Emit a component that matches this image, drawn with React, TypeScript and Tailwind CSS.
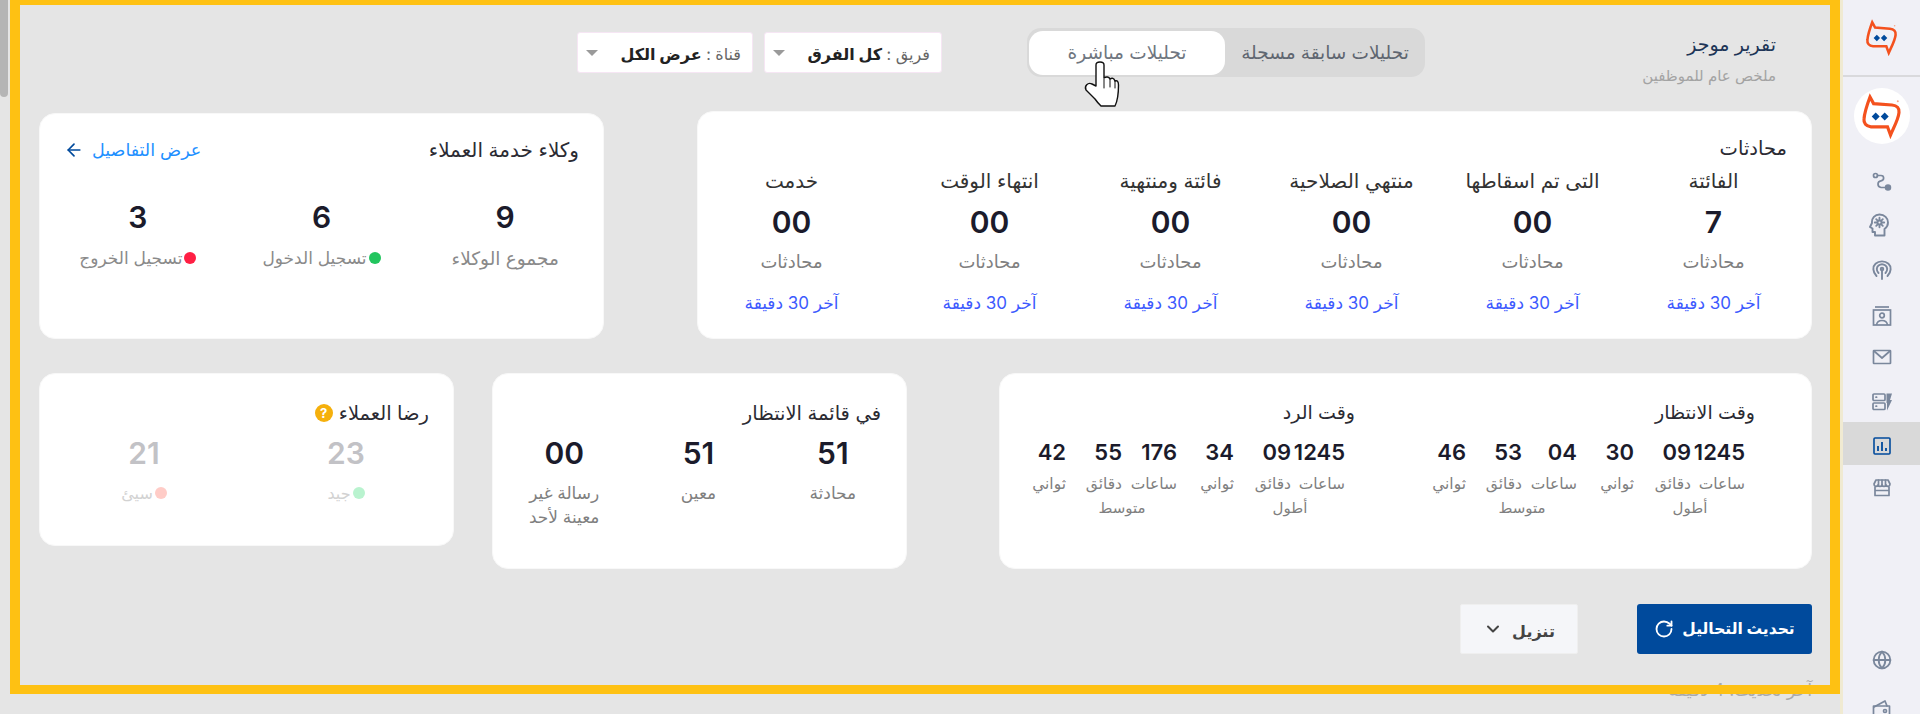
import React from "react";
import { RotateCw, ChevronDown, ArrowLeft, Globe } from "lucide-react";

const font = "font-['Inter','Noto_Sans','DejaVu_Sans',sans-serif]";

function Logo({ w, h }: { w: number; h: number }) {
  return (
    <svg width={w} height={h} viewBox="0 0 41 47" fill="none">
      <path d="M9 4 L12.6 10.6 L31 12 C36 12.5 38.5 15 38 19.5 C37.5 26 33 34 29.5 42 L26.5 33.8 L10 33.8 C5 33.5 2.5 30 3 26 C3.5 20 6 12 9 4 Z" stroke="#f4511e" strokeWidth="3.2" strokeLinejoin="miter" />
      <path d="M10.7 23.5 L14.7 19.5 L18.7 23.5 L14.7 27.5 Z M19.7 23.5 L23.7 19.5 L27.7 23.5 L23.7 27.5 Z" fill="#004a9c" />
      <circle cx="36.8" cy="8.3" r="1" fill="#f6a58a" />
    </svg>
  );
}

const s = { stroke: "#7a879c", strokeWidth: 1.7, fill: "none", strokeLinecap: "round" as const, strokeLinejoin: "round" as const };

const RouteIcon = () => (
  <svg width="20" height="20" viewBox="0 0 20 20" {...s}>
    <circle cx="3.5" cy="3.5" r="2" />
    <path d="M5.5 3.5 H9 C12.5 3.5 12.5 8.5 9 8.8 C5 9.2 5 15 9 15.5 H14" />
    <circle cx="16" cy="15.5" r="2.4" fill="#7a879c" />
  </svg>
);
const HeadIcon = () => (
  <svg width="20" height="24" viewBox="0 0 20 24" {...s} strokeWidth={1.9}>
    <path d="M6 22.5 V19 H3.5 V15.5 L1 14 L3 10 C2.5 5 6 1.5 10.5 1.5 C15.5 1.5 19 5 19 9.5 C19 12.5 17.5 14.5 15.5 16 V22.5 Z" />
    <circle cx="10.5" cy="9.5" r="2" />
    <path d="M10.5 4.8 V6.5 M10.5 12.5 V14.2 M5.8 9.5 H7.5 M13.5 9.5 H15.2 M7.2 6.2 L8.4 7.4 M12.6 11.6 L13.8 12.8 M13.8 6.2 L12.6 7.4 M8.4 11.6 L7.2 12.8" />
  </svg>
);
const RadioIcon = () => (
  <svg width="20" height="20" viewBox="0 0 20 20" {...s} strokeWidth={1.9}>
    <path d="M4.5 16 C0.5 12 0.5 6.5 3.5 3.8 C7 0.5 13 0.5 16.5 3.8 C19.5 6.5 19.5 12 15.5 16" />
    <path d="M6.5 13 C4 10.5 4.5 7 6.5 5.5 C8.5 4 11.5 4 13.5 5.5 C15.5 7 16 10.5 13.5 13" />
    <circle cx="10" cy="9" r="1.3" />
    <path d="M10 10.5 V19" />
  </svg>
);
const ContactIcon = () => (
  <svg width="20" height="20" viewBox="0 0 20 20" {...s} strokeLinecap="butt" strokeLinejoin="miter">
    <path d="M3 1 H17" />
    <rect x="1.5" y="4" width="17" height="15" />
    <circle cx="10" cy="9.5" r="2.3" />
    <path d="M4.5 19 C5 15.5 7 14.5 10 14.5 C13 14.5 15 15.5 15.5 19" />
  </svg>
);
const MailIcon = () => (
  <svg width="20" height="16" viewBox="0 0 20 16" {...s}>
    <rect x="1.5" y="1.5" width="17" height="13" rx="0.5" />
    <path d="M2 2 L10 9 L18 2" />
  </svg>
);
const ServerBoltIcon = () => (
  <svg width="20" height="18" viewBox="0 0 20 18" {...s}>
    <rect x="1" y="1" width="12" height="6.5" rx="1" />
    <rect x="1" y="10" width="12" height="6.5" rx="1" />
    <path d="M4 4.2 H4.6 M4 13.2 H4.6" />
    <path d="M14.5 0.5 H20 L18 7 H20 L15 17.5 V10 H14.5 Z" fill="#7a879c" stroke="none" />
  </svg>
);
const ChartIcon = () => (
  <svg width="18" height="18" viewBox="0 0 18 18" fill="none" stroke="#004a9c" strokeWidth="1.6">
    <rect x="1" y="1" width="16" height="16" rx="1" />
    <path d="M5 14 V9 M9 14 V5 M13 14 V11" strokeWidth="1.8" />
  </svg>
);
const StoreIcon = () => (
  <svg width="18" height="18" viewBox="0 0 18 18" {...s}>
    <path d="M3 1 H15 L17 5 C17 8 14 8 13 6 C12 8 10 8 9 6 C8 8 6 8 5 6 C4 8 1 8 1 5 Z" />
    <path d="M5.5 1 V6 M9 1 V6 M12.5 1 V6" />
    <path d="M2 8 V16.5 H16 V8 M2 11.5 H16" />
  </svg>
);
const WalletIcon = () => (
  <svg width="20" height="18" viewBox="0 0 20 18" {...s}>
    <path d="M2 8 L13 2 L15 7" />
    <rect x="1.5" y="7" width="16" height="10" />
    <circle cx="13" cy="12" r="1.5" />
  </svg>
);
const HandCursor = () => (
  <svg width="60" height="65" viewBox="0 0 60 65" fill="#fff" stroke="#111" strokeWidth="1.4" strokeLinejoin="round" strokeLinecap="round">
    <path d="M16 36 V15 C16 11 24 11 24 15 V28 C26 26.5 29 26.5 30 29 C32 27.5 34 28 35 31 C37 30 38.5 31.5 38.5 35 C38.5 44 38 50 35 56 H21 C19 54 17 52 15 49 L6 40 C4 36 8 32 12 34 Z" />
    <path d="M24 29 V38 M30 29 V37 M35 31 V38" fill="none" strokeWidth="1" />
  </svg>
);

const mainCols = ["الفائتة", "التى تم اسقاطها", "منتهي الصلاحية", "فائتة ومنتهية", "انتهاء الوقت", "خدمت"];

function Select({ label, value, w }: { label: string; value: string; w: string }) {
  return (
    <div className={`${w} h-[41px] bg-white border border-[#f6e6f4] rounded-[3px] flex items-center justify-between pr-[11px] pl-[8px] text-[16px] text-[#333]`}>
      <span className="pt-[2px]">
        <span className="text-[#666]">{label} : </span>
        <b className="font-bold text-[#222]">{value}</b>
      </span>
      <span className="w-0 h-0 border-x-[6px] border-x-transparent border-t-[6px] border-t-[#9a9a9a]" />
    </div>
  );
}

function TimeGroup({ nums, labels, widths, title }: { nums: string[]; labels: string[]; widths: string[]; title: string }) {
  return (
    <div className="flex flex-col w-[168px]">
      <div className="flex">
        {nums.map((n, i) => (
          <div key={i} className={widths[i]}>
            <div className="text-[22px] leading-[30px] font-semibold text-[#1b1b2b]" dir="ltr" style={{ textAlign: "right" }}>{n}</div>
            <div className="mt-[5px] text-[15.5px] leading-[24px] text-[#808080] whitespace-nowrap">{labels[i]}</div>
          </div>
        ))}
      </div>
      <div className="w-[110px] text-center text-[15px] leading-[24px] text-[#808080]">{title}</div>
    </div>
  );
}

function TimeBlock({ title, a, b }: { title: string; a: string[]; b: string[] }) {
  const l = ["ساعات", "دقائق", "ثواني"];
  return (
    <div>
      <div className="text-[19px] leading-[24px] text-[#2b2b33]">{title}</div>
      <div className="flex mt-[12px] mr-[10px]">
        <TimeGroup nums={a} labels={l} widths={["w-[54px]", "w-[57px]", "w-[57px]"]} title="أطول" />
        <TimeGroup nums={b} labels={l} widths={["w-[55px]", "w-[56px]", "w-[57px]"]} title="متوسط" />
      </div>
    </div>
  );
}

function Card({ className, children }: { className: string; children: React.ReactNode }) {
  return <div className={`bg-white border border-[#f8f8f8] rounded-[16px] ${className}`}>{children}</div>;
}

export default function App() {
  return (
    <div className={`${font} flex w-[1920px] h-[714px] overflow-hidden bg-[#e5e5e5]`} dir="ltr">
      <div className="relative w-[1840px] h-[714px] overflow-hidden">
        {/* scrollbar thumb */}
        <div className="absolute left-0 top-0 w-[8px] h-[97px] rounded-b-[4px] bg-[#b5b5b5]" />
        {/* page */}
        <div dir="rtl" className="pr-[28px] pl-[39px] pt-[28px]">
          <div className="flex items-start h-[83px]">
            <div className="w-[351px] mr-[36px] pt-[4px]">
              <div className="text-[19px] leading-[26px] text-[#1d3557]">تقرير موجز</div>
              <div className="mt-[6px] text-[15px] leading-[24px] text-[#a3a3a3]">ملخص عام للموظفين</div>
            </div>
            <div className="flex items-center w-[398px] h-[49px] rounded-[14px] bg-[#d9d9d9] text-[18.5px] text-[#5f6670]">
              <div className="w-[200px] text-center whitespace-nowrap">تحليلات سابقة مسجلة</div>
              <div className="relative w-[196px] h-[44px] rounded-[14px] bg-white flex items-center justify-center text-[#6f7680]">
                تحليلات مباشرة
                <div className="absolute left-[51px] top-[19px]"><HandCursor /></div>
              </div>
            </div>
            <div className="flex gap-[11px] mr-[85px] mt-[4px]">
              <Select label="فريق" value="كل الفرق" w="w-[178px]" />
              <Select label="قناة" value="عرض الكل" w="w-[176px]" />
            </div>
          </div>

          <div className="flex items-end gap-[93px]">
            <Card className="w-[1115px] h-[228px] pt-[24px] pr-[24px]">
              <div className="text-[19.5px] leading-[24px] text-[#2b2b33]">محادثات</div>
              <div className="flex mt-[9px] -mr-[17px]">
                {mainCols.map((c, i) => (
                  <div key={c} className={`w-[181px] text-center shrink-0 ${i === 5 ? "mr-[17px]" : ""}`}>
                    <div className="text-[20px] leading-[24px] text-[#333]">{c}</div>
                    <div className="mt-[11px] text-[30px] leading-[36px] font-semibold text-[#1b1b2b]">{i === 0 ? "7" : "00"}</div>
                    <div className="mt-[10px] text-[18px] leading-[24px] text-[#808080]">محادثات</div>
                    <div className="mt-[17px] text-[17px] leading-[24px] text-[#3d5afe]">آخر 30 دقيقة</div>
                  </div>
                ))}
              </div>
            </Card>
            <Card className="w-[565px] h-[226px] pt-[24px] px-[24px]">
              <div className="flex justify-between items-center h-[24px]">
                <div className="text-[20px] text-[#2b2b33]">وكلاء خدمة العملاء</div>
                <div className="flex items-center gap-[8px] text-[17.5px] text-[#1e90ff]">
                  عرض التفاصيل
                  <ArrowLeft size={20} color="#004a9c" />
                </div>
              </div>
              <div className="grid grid-cols-3 -mx-[18px] mt-[37px] text-center">
                {[["9", "مجموع الوكلاء", ""], ["6", "تسجيل الدخول", "bg-[#22c55e]"], ["3", "تسجيل الخروج", "bg-[#ff1f44]"]].map(([n, l, d]) => (
                  <div key={n}>
                    <div className="text-[30px] leading-[36px] font-semibold text-[#1b1b2b]">{n}</div>
                    <div className={`mt-[11px] flex items-center justify-center gap-[2px] ${d ? "text-[17px]" : "text-[18.5px]"} leading-[24px] text-[#8a8a8a]`}>
                      {d && <span className={`w-[12px] h-[12px] rounded-full ${d}`} />}
                      {l}
                    </div>
                  </div>
                ))}
              </div>
            </Card>
          </div>

          <div className="flex items-start mt-[34px]">
            <Card className="w-[813px] h-[196px] pt-[27px] pr-[56px] flex">
              <div className="w-[400px] shrink-0">
                <TimeBlock title="وقت الانتظار" a={["1245", "09", "30"]} b={["04", "53", "46"]} />
              </div>
              <TimeBlock title="وقت الرد" a={["1245", "09", "34"]} b={["176", "55", "42"]} />
            </Card>
            <Card className="w-[415px] h-[196px] mr-[92px] pt-[27px] pr-[25px]">
              <div className="text-[19.5px] leading-[24px] text-[#2b2b33]">في قائمة الانتظار</div>
              <div className="grid grid-cols-3 w-[403px] -mr-[19px] mt-[10px] text-center">
                {[["51", "محادثة"], ["51", "معين"], ["00", "رسالة غير معينة لأحد"]].map(([n, l], i) => (
                  <div key={i} className="flex flex-col items-center">
                    <div className="text-[30px] leading-[36px] font-semibold text-[#1b1b2b]">{n}</div>
                    <div className="mt-[10px] w-[90px] text-[17px] leading-[24px] text-[#808080]">{l}</div>
                  </div>
                ))}
              </div>
            </Card>
            <Card className="w-[415px] h-[173px] mr-[38px] pt-[27px] pr-[24px]">
              <div className="flex items-center gap-[6px] text-[19.5px] leading-[24px] text-[#2b2b33]">
                رضا العملاء
                <span className="w-[18px] h-[18px] rounded-full bg-[#f5b00c] text-white text-[13px] font-bold flex items-center justify-center">?</span>
              </div>
              <div className="grid grid-cols-2 w-[404px] -mr-[18px] mt-[10px] text-center">
                {[["23", "جيد", "bg-[#b9f3cf]"], ["21", "سيئ", "bg-[#ffccc7]"]].map(([n, l, d]) => (
                  <div key={n}>
                    <div className="text-[30px] leading-[36px] font-semibold text-[#c2c2c6]">{n}</div>
                    <div className="mt-[10px] flex items-center justify-center gap-[2px] text-[16px] leading-[24px] text-[#d2d2d2]">
                      <span className={`w-[12px] h-[12px] rounded-full ${d}`} />
                      {l}
                    </div>
                  </div>
                ))}
              </div>
            </Card>
          </div>

          <div className="flex items-start mt-[35px]">
            <button className="w-[175px] h-[50px] rounded-[3px] bg-[#004a9c] text-white text-[15.5px] font-bold flex items-center justify-center gap-[8px]">
              تحديث التحاليل
              <RotateCw size={20} strokeWidth={2.2} />
            </button>
            <button className="w-[118px] h-[50px] mr-[59px] rounded-[2px] bg-[#f5f6f9] border border-[#efefef] text-[#444] text-[16px] font-semibold flex items-center justify-center gap-[9px]">
              <span className="pt-[4px]">تنزيل</span>
              <ChevronDown size={20} strokeWidth={2.4} />
            </button>
          </div>
          <div className="mt-[24px] text-[17.5px] leading-[24px] text-[#aaaaaa]">آخر تحديث: 4 دقيقة</div>
        </div>
        {/* highlight frame over the page */}
        <div className="absolute left-[10px] top-0 w-[1830px] h-[694px] border-x-[10px] border-t-[5px] border-b-[9px] border-[#fec113] pointer-events-none" />
      </div>

      <aside className="relative w-[80px] h-[714px] bg-[#f0f0f6] border-l-[3px] border-l-[#f0ead2] flex flex-col items-center">
        <div className="w-full h-[77px] shrink-0 flex items-center justify-center border-b-2 border-b-[#d9d9dc]">
          <Logo w={33} h={38} />
        </div>
        <div className="w-[56px] h-[56px] mt-[11px] rounded-full bg-white flex items-center justify-center shrink-0">
          <Logo w={41} h={47} />
        </div>
        <div className="mt-[28px] flex flex-col items-center w-full">
          <div className="h-[20px] flex items-center"><RouteIcon /></div>
          <div className="mt-[21px] h-[24px] flex items-center -ml-[6px]"><HeadIcon /></div>
          <div className="mt-[23px] h-[20px] flex items-center"><RadioIcon /></div>
          <div className="mt-[26px] h-[20px] flex items-center"><ContactIcon /></div>
          <div className="mt-[21px] h-[20px] flex items-center"><MailIcon /></div>
          <div className="mt-[25px] h-[20px] flex items-center"><ServerBoltIcon /></div>
          <div className="mt-[10px] w-full h-[43px] pt-[4px] bg-[#d9d9d9] flex items-center justify-center"><ChartIcon /></div>
          <div className="mt-[14px] h-[18px] flex items-center"><StoreIcon /></div>
          <div className="mt-[153px] h-[20px] flex items-center"><Globe size={20} color="#7a879c" strokeWidth={2.2} /></div>
          <div className="mt-[29px] h-[18px] flex items-center"><WalletIcon /></div>
        </div>
      </aside>
    </div>
  );
}
